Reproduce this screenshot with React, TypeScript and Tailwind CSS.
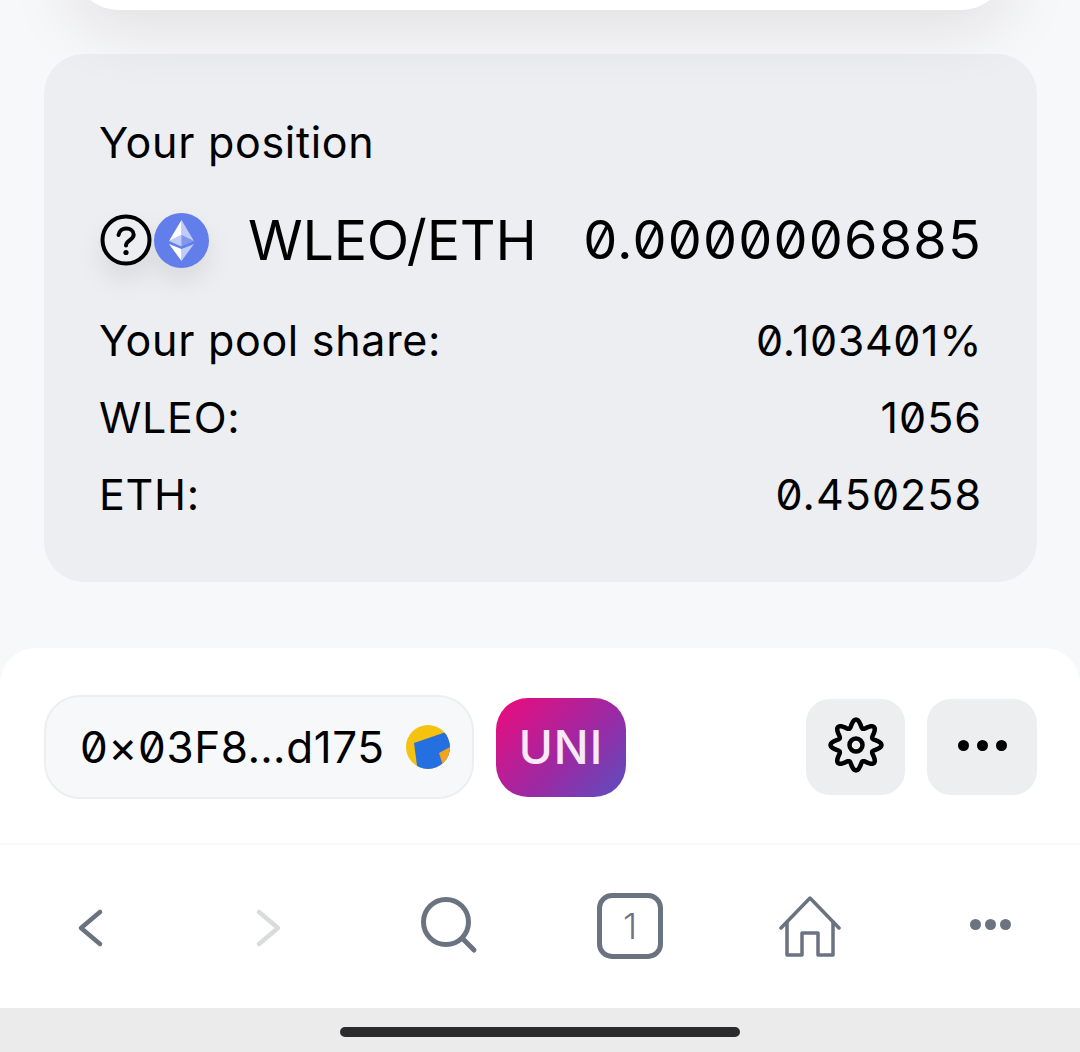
import React from 'react';

const rows = [
  { label: 'Your pool share:', value: '0.103401%', valueClass: 'text-[43px] tracking-[0.6px]' },
  { label: 'WLEO:', value: '1056', valueClass: 'text-[43px] tracking-[1px]' },
  { label: 'ETH:', value: '0.450258', valueClass: 'text-[43px] tracking-[1px]' },
];

// wavy eight lobed outline for the settings icon
const gearPath =
  Array.from({ length: 96 }, (_, i) => {
    const angle = (i / 96) * Math.PI * 2;
    const radius = 21.5 + 4 * Math.cos(8 * angle);
    const x = 28 + radius * Math.sin(angle);
    const y = 28 - radius * Math.cos(angle);
    return `${i === 0 ? 'M' : 'L'}${x.toFixed(2)} ${y.toFixed(2)}`;
  }).join(' ') + ' Z';

function QuestionIcon() {
  return (
    <svg viewBox="0 0 52 52" className="block w-[52px] h-[52px]" fill="none" stroke="#000000" strokeLinecap="round">
      <circle cx="26" cy="26" r="23.5" strokeWidth="4" fill="#eceef2" />
      <path d="M18.500 21c.6-4 3.700-6.500 7.700-6.500 4.300 0 7.500 2.600 7.500 6.200 0 5.300-7.700 5.600-7.700 10.800" strokeWidth="4" />
      <circle cx="26" cy="38.500" r="2.600" fill="#000000" stroke="none" />
    </svg>
  );
}

function EthLogo() {
  return (
    <svg viewBox="0 0 55 55" className="block w-[55px] h-[55px] ml-[2px]">
      <circle cx="27.5" cy="27.5" r="27.5" fill="#627eea" />
      <path d="M27.5 7 L27.5 22 L40 28 Z" fill="#ffffff" fillOpacity="0.6" />
      <path d="M27.5 7 L15 28 L27.5 22 Z" fill="#ffffff" />
      <path d="M27.5 36 L27.5 48 L40 31 Z" fill="#ffffff" fillOpacity="0.6" />
      <path d="M27.5 36 L15 31 L27.5 48 Z" fill="#ffffff" />
      <path d="M27.5 33.5 L40 28 L27.5 22 Z" fill="#ffffff" fillOpacity="0.2" />
      <path d="M15 28 L27.5 33.5 L27.5 22 Z" fill="#ffffff" fillOpacity="0.6" />
    </svg>
  );
}

function Avatar() {
  return (
    <svg viewBox="0 0 44 44" className="w-[44px] h-[44px] shrink-0">
      <clipPath id="avatar-clip">
        <circle cx="22" cy="22" r="22" />
      </clipPath>
      <g clipPath="url(#avatar-clip)">
        <rect width="44" height="44" fill="#f5c20f" />
        <path d="M8 18 L40 7 L48 30 L48 48 L12 48 Z" fill="#2470e0" />
        <path d="M33 28 L44 22 L44 42 L38 44 Z" fill="#f2a51c" />
      </g>
    </svg>
  );
}

function GearIcon() {
  return (
    <svg viewBox="0 0 56 56" className="w-[56px] h-[56px] mb-[4px]" fill="none" stroke="#000000" strokeWidth="4.5" strokeLinejoin="round">
      <path d={gearPath} />
      <circle cx="28" cy="28" r="6.5" />
    </svg>
  );
}

function Dots({ color, size, gap }: { color: string; size: string; gap: string }) {
  return (
    <div className={`flex ${gap}`}>
      <span className={`${size} ${color} rounded-full`} />
      <span className={`${size} ${color} rounded-full`} />
      <span className={`${size} ${color} rounded-full`} />
    </div>
  );
}

export default function App() {
  return (
    <div className="w-[1080px] h-[1052px] overflow-hidden flex flex-col bg-[#f7f8fa] text-black font-['Inter',sans-serif]">
      {/* Card that scrolled off the top */}
      <div className="relative z-10 -mt-[50px] mx-[70px] h-[60px] shrink-0 bg-white rounded-b-[50px] shadow-[0_10px_70px_rgba(40,20,30,0.14)]" />

      {/* Position panel */}
      <div className="mt-[44px] ml-[44px] w-[993px] h-[528px] shrink-0 bg-[#eceef2] rounded-[40px] pt-[62px] pl-[55px] pr-[55px]">
        <div className="text-[43px] tracking-[0.7px] leading-[52px]">Your position</div>

        <div className="mt-[24px] flex items-center justify-between h-[96px]">
          <div className="flex items-center">
            <div className="flex items-center ml-[1px] [filter:drop-shadow(0_14px_12px_rgba(0,0,0,0.08))]">
              <QuestionIcon />
              <EthLogo />
            </div>
            <span className="ml-[39px] text-[55.5px] leading-none tracking-[-0.2px]">WLEO/ETH</span>
          </div>
          <span className="text-[54px] leading-none slashed-zero tracking-[1.2px]">0.0000006885</span>
        </div>

        <div className="mt-[14px] flex flex-col">
          {rows.map((row) => (
            <div key={row.label} className="flex items-center justify-between h-[77px]">
              <span className="text-[43px] tracking-[0.7px]">{row.label}</span>
              <span className={`slashed-zero ${row.valueClass}`}>{row.value}</span>
            </div>
          ))}
        </div>
      </div>

      {/* Wallet bar */}
      <div className="mt-[66px] h-[195px] shrink-0 bg-white rounded-t-[36px] flex items-start pt-[47px] pl-[44px] pr-[43px]">
        <div className="h-[104px] w-[430px] rounded-[36px] bg-[#f7f8fa] border-[2px] border-[#eceef0] flex items-center justify-between pl-[34px] pr-[22px]">
          <span className="text-[44px] slashed-zero tracking-[0.6px]">0×03F8…d175</span>
          <Avatar />
        </div>
        <div className="ml-[22px] mt-[3px] w-[130px] h-[99px] rounded-[32px] bg-[linear-gradient(135deg,#ee0a7c,#9a2aa4_58%,#5a4fc0)] flex items-center justify-center text-white/90 text-[46px] font-medium tracking-[1px]">
          UNI
        </div>
        <div className="ml-auto mt-[4px] w-[99px] h-[96px] rounded-[24px] bg-[#eceef0] flex items-center justify-center">
          <GearIcon />
        </div>
        <div className="ml-[22px] mt-[4px] w-[110px] h-[96px] rounded-[24px] bg-[#eceef0] flex items-center justify-center pb-[4px]">
          <Dots color="bg-black" size="w-[11px] h-[11px]" gap="gap-[8px]" />
        </div>
      </div>

      {/* Browser toolbar */}
      <div className="h-[165px] shrink-0 bg-white border-t-[2px] border-[#f8f8f9] grid grid-cols-6 items-center justify-items-center">
        <svg viewBox="0 0 30 44" className="w-[30px] h-[44px] ml-[2px] mt-[3px]" fill="none" stroke="#6b7280" strokeWidth="4.5" strokeLinecap="round" strokeLinejoin="round">
          <path d="M24 6 L5 22 L24 38" />
        </svg>
        <svg viewBox="0 0 30 44" className="w-[30px] h-[44px] mr-[4px] mt-[3px]" fill="none" stroke="#d9dbde" strokeWidth="4.5" strokeLinecap="round" strokeLinejoin="round">
          <path d="M6 6 L25 22 L6 38" />
        </svg>
        <svg viewBox="0 0 60 60" className="w-[60px] h-[60px] mb-[1px]" fill="none" stroke="#6b7280" strokeWidth="5" strokeLinecap="round">
          <circle cx="26" cy="26" r="22.500" />
          <path d="M43 43 L54 54" />
        </svg>
        <div className="w-[66px] h-[66px] mb-[2px] rounded-[15px] border-[5px] border-[#6b7280] flex items-center justify-center text-[#6b7280] text-[36px] font-light">
          1
        </div>
        <svg viewBox="0 0 62 62" className="w-[62px] h-[62px] mb-[2px]" fill="none" stroke="#6b7280" strokeWidth="3.500" strokeLinecap="round" strokeLinejoin="round">
          <path d="M2 33 L31 3 L60 33" />
          <path d="M8 27 L8 60 L23 60 L23 38 L39 38 L39 60 L54 60 L54 27" />
        </svg>
        <div className="mb-[5px]">
          <Dots color="bg-[#6b7280]" size="w-[11px] h-[11px]" gap="gap-[4px]" />
        </div>
      </div>

      {/* Home indicator */}
      <div className="flex-1 bg-[#ebebec] flex justify-center pt-[19px]">
        <div className="w-[400px] h-[10px] rounded-full bg-[#2b2b2d]" />
      </div>
    </div>
  );
}
